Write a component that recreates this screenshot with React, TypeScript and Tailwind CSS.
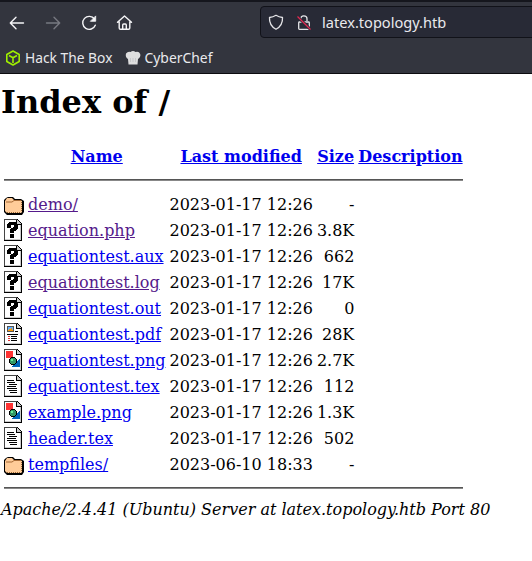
import React from "react";

type Kind = "folder" | "unknown" | "layout" | "image" | "text";

function Page({ children }: { children: React.ReactNode }) {
  return (
    <svg width="20" height="22" viewBox="0 0 20 22" className="block" shapeRendering="crispEdges">
      <path d="M0 0H13L18 5V22H0Z" fill="#000" />
      <path d="M1 1H12V6H17V21H1Z" fill="#fff" />
      <path d="M0 0H13V1H0ZM0 0H1V21H0Z" fill="#444" />
      <path d="M13 1L17 5H13Z" fill="#ccc" />
      <path d="M12 1H13V5H17V6H12Z" fill="#000" />
      <path d="M16 6H17V20H16ZM1 20H17V21H1Z" fill="#ccc" />
      {children}
    </svg>
  );
}

function FileIcon({ kind }: { kind: Kind }) {
  switch (kind) {
    case "folder":
      return (
        <svg width="20" height="22" viewBox="0 0 20 22" className="block">
          <path d="M2 5L4 4H9L11 6H17L20 8V19L18 22H3L0 19V7Z" fill="#000" />
          <path d="M1 8L3 5H8L10 7H16L18 8V19L17 20H3L1 18Z" fill="#ffcc99" />
          <path d="M2 9H8L10 7.5H17" stroke="#a66a36" fill="none" />
          <path d="M3 19.5H17M17.5 9V19" stroke="#996633" strokeDasharray="1 1" fill="none" />
        </svg>
      );
    case "unknown":
      return (
        <Page>
          <path d="M5 3H12V4H13V5H14V10H13V11H12V12H10V14H6V10H7V9H9V8H10V6H7V9H3V5H4V4H5ZM6 15H10V19H6Z" fill="#000" />
        </Page>
      );
    case "layout":
      return (
        <Page>
          <path d="M3 3H10V9H3Z" fill="#555" />
          <path d="M4 4H9V8H4Z" fill="#66b3ff" />
          <path d="M4 7H5V6H7V5H8V7H9V8H4Z" fill="#ff9900" />
          <path d="M11 8H14V9H11ZM3 11H14V12H3ZM7 13H13V14H7ZM7 15H13V16H7ZM7 17H13V18H7Z" fill="#000" />
          <path d="M4 13H6V14H4ZM4 15H6V16H4ZM4 17H6V18H4Z" fill="#dd3333" />
        </Page>
      );
    case "image":
      return (
        <Page>
          <path d="M2 2H9V9H2Z" fill="#ff3333" />
          <path d="M16 9V18H8Z" fill="#0066bb" />
          <path d="M7 8H11V9H12V10H13V14H12V15H11V16H7V15H6V14H5V10H6V9H7Z" fill="#000" />
          <path d="M7 9H11V10H12V14H11V15H7V14H6V10H7Z" fill="#339966" />
          <path d="M7 10H9V12H7Z" fill="#66ee99" />
        </Page>
      );
    case "text":
      return (
        <Page>
          <path d="M3 5H10V6H3ZM3 7H11V8H3ZM5 9H13V10H5ZM3 11H12V12H3ZM3 13H13V14H3ZM5 15H13V16H5ZM6 17H13V18H6Z" fill="#000" />
        </Page>
      );
  }
}

const files: { icon: Kind; name: string; date: string; size: string; visited?: boolean }[] = [
  { icon: "folder", name: "demo/", date: "2023-01-17 12:26", size: "-", visited: true },
  { icon: "unknown", name: "equation.php", date: "2023-01-17 12:26", size: "3.8K", visited: true },
  { icon: "unknown", name: "equationtest.aux", date: "2023-01-17 12:26", size: "662" },
  { icon: "unknown", name: "equationtest.log", date: "2023-01-17 12:26", size: "17K", visited: true },
  { icon: "unknown", name: "equationtest.out", date: "2023-01-17 12:26", size: "0" },
  { icon: "layout", name: "equationtest.pdf", date: "2023-01-17 12:26", size: "28K" },
  { icon: "image", name: "equationtest.png", date: "2023-01-17 12:26", size: "2.7K" },
  { icon: "text", name: "equationtest.tex", date: "2023-01-17 12:26", size: "112" },
  { icon: "image", name: "example.png", date: "2023-01-17 12:26", size: "1.3K" },
  { icon: "text", name: "header.tex", date: "2023-01-17 12:26", size: "502" },
  { icon: "folder", name: "tempfiles/", date: "2023-06-10 18:33", size: "-" },
];

function Rule() {
  return (
    <tr>
      <td colSpan={5} className="p-px">
        <div className="my-2 h-[2px] border-t border-b border-t-[#555] border-b-[#888]" />
      </td>
    </tr>
  );
}

function Browser() {
  return (
    <header className="h-[74px] overflow-hidden border-t-2 border-b border-t-[#15161d] border-b-[#0c0c0f] bg-[#33353e] font-['Noto_Sans',sans-serif] text-[14.6px] text-[#e9e9ed]">
      <div className="flex h-10 items-center">
        <svg width="150" height="40" viewBox="0 2 150 40" className="shrink-0" fill="none" stroke="#f5f5f7" strokeWidth="1.4" strokeLinecap="round" strokeLinejoin="round">
          <path d="M23.5 23H10.5M16 17.3L10.3 23L16 28.7" />
          <path d="M46.5 23H59.5M54 17.3L59.7 23L54 28.7" stroke="#777981" />
          <path d="M94.5 19A6.5 6.5 0 1 0 95.3 25.2" />
          <path d="M95.7 16.3V21.3H90.7Z" fill="#f5f5f7" strokeWidth=".8" />
          <path d="M117.5 22.3L124.5 16L131.5 22.3M119.2 21.5V28Q119.2 29.3 120.5 29.3H128.5Q129.8 29.3 129.8 28V21.5M122.7 29V25Q122.7 24 123.7 24H125.3Q126.3 24 126.3 25V29" />
        </svg>
        <div className="ml-[110px] flex h-8 w-[290px] shrink-0 items-center rounded-[4px] border border-[#111219] bg-[#282a36]">
          <svg width="60" height="30" viewBox="261 7 60 30" className="shrink-0" fill="none" stroke="#e4e4e7" strokeWidth="1.3" strokeLinejoin="round">
            <path d="M276 15.3Q279 17.2 282.5 17.5Q283 25.5 276 29.3Q269 25.5 269.5 17.5Q273 17.2 276 15.3Z" />
            <path d="M300.8 21V18.8Q300.8 15.8 303.8 15.8Q307 15.8 307 18.8V21M299.5 22H308.5Q309.3 22 309.3 22.8V28.5Q309.3 29.3 308.5 29.3H299.5Q298.7 29.3 298.7 28.5V22.8Q298.7 22 299.5 22Z" />
            <path d="M297.5 16.5L310.5 29.5" stroke="#282a36" strokeWidth="3" />
            <path d="M297.5 16.5L310.5 29.5" stroke="#e22850" />
          </svg>
          <span className="ml-px pt-px">latex.topology.htb</span>
        </div>
      </div>
      <div className="flex h-8 items-center pl-[5px]">
        <svg width="16" height="16" viewBox="0 0 16 16" fill="none" stroke="#9fef00" strokeWidth="1.6" strokeLinejoin="round">
          <path d="M8 1L14.2 4.5V11.5L8 15L1.8 11.5V4.5ZM4 5.5L8 7.8L12 5.5M8 8V13" />
        </svg>
        <span className="ml-1 w-[96px] whitespace-nowrap text-[13.8px]">Hack The Box</span>
        <svg width="16" height="16" viewBox="0 0 16 16" className="ml-1">
          <path d="M3 9Q0 7 1 3.5Q3 1 5.5 2Q8 0 10.5 2Q14 1 15.2 4Q16 7 13 9L12.5 14.5H3.5Z" fill="#dededf" />
          <path d="M5.5 8V12M8 8V12M10.5 8V12" stroke="#bfc0c3" strokeWidth=".7" />
        </svg>
        <span className="ml-[3.5px] text-[13.9px]">CyberChef</span>
      </div>
    </header>
  );
}

export default function App() {
  const columns = ["Name", "Last modified", "Size", "Description"];
  return (
    <div className="h-[561px] overflow-hidden bg-white font-['DejaVu_Serif',serif] text-base text-black">
      <Browser />
      <main className="pl-px">
        <h1 className="pt-[9px] text-[32px] leading-[38px] font-bold">Index of /</h1>
        <table className="mt-[21px] border-separate border-spacing-[2px] leading-[19px]">
          <tbody>
            <tr>
              <th className="p-px"><div className="h-[22px] w-5" /></th>
              {columns.map((c) => (
                <th key={c} className="p-px text-center whitespace-nowrap">
                  <a className="text-[#0000ee] underline">{c}</a>
                </th>
              ))}
            </tr>
            <Rule />
            {files.map((f) => (
              <tr key={f.name}>
                <td className="p-px"><FileIcon kind={f.icon} /></td>
                <td className="p-px whitespace-nowrap">
                  <a className={f.visited ? "text-[#551a8b] underline" : "text-[#0000ee] underline"}>{f.name}</a>
                </td>
                <td className="p-px text-right whitespace-nowrap">{f.date}</td>
                <td className="p-px text-right">{f.size}</td>
                <td className="p-px" />
              </tr>
            ))}
            <Rule />
          </tbody>
        </table>
        <address className="leading-[19px] italic whitespace-nowrap">
          Apache/2.4.41 (Ubuntu) Server at latex.topology.htb Port 80
        </address>
      </main>
    </div>
  );
}
